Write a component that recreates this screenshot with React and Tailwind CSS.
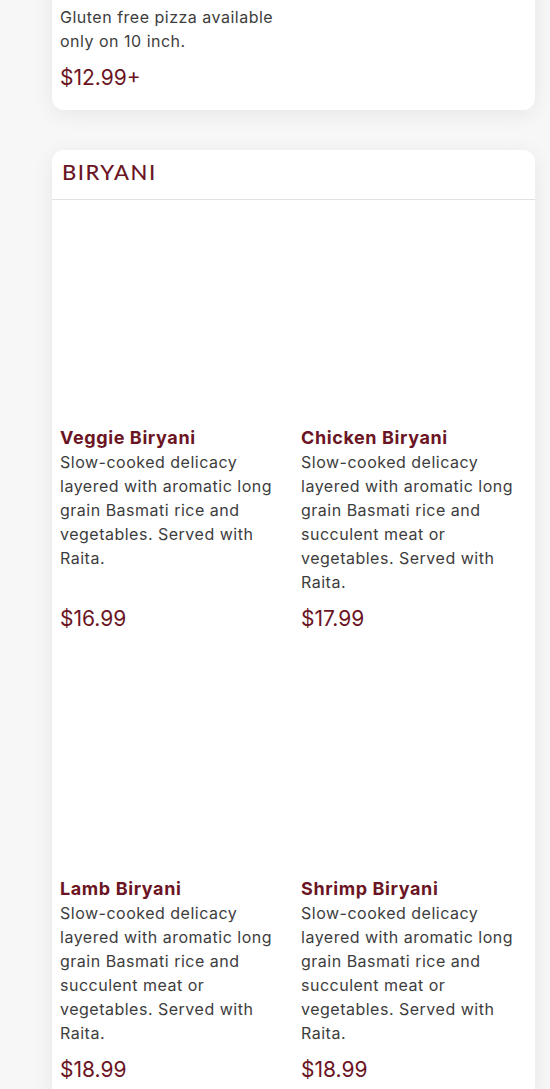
const biryani = [
  {
    name: 'Veggie Biryani',
    desc: 'Slow-cooked delicacy layered with aromatic long grain Basmati rice and vegetables. Served with Raita.',
    price: '$16.99',
  },
  {
    name: 'Chicken Biryani',
    desc: 'Slow-cooked delicacy layered with aromatic long grain Basmati rice and succulent meat or vegetables. Served with Raita.',
    price: '$17.99',
  },
  {
    name: 'Lamb Biryani',
    desc: 'Slow-cooked delicacy layered with aromatic long grain Basmati rice and succulent meat or vegetables. Served with Raita.',
    price: '$18.99',
  },
  {
    name: 'Shrimp Biryani',
    desc: 'Slow-cooked delicacy layered with aromatic long grain Basmati rice and succulent meat or vegetables. Served with Raita.',
    price: '$18.99',
  },
]

function MenuItem({ item }) {
  return (
    <div className="flex flex-col">
      {/* photo slot, image not loaded */}
      <div className="h-[210px]" />
      <h3 className="mt-2 text-[18px] leading-6 font-bold tracking-[0.6px] text-[#6b1524]">{item.name}</h3>
      <p className="text-[16px] leading-6 tracking-[0.5px] text-[#3d3d3d] pr-2">{item.desc}</p>
      <p className="mt-auto pt-[11px] text-[21px] leading-7 text-[#6b1524]">{item.price}</p>
    </div>
  )
}

export default function App() {
  return (
    <div className="min-h-screen bg-[#f7f7f7] pl-[52px] pr-[15px] overflow-hidden" style={{ fontFamily: 'Inter, sans-serif' }}>
      <div className="-mt-[245px]">
        {/* PIZZA (tail end) */}
        <section className="bg-white rounded-xl shadow-[0_4px_22px_rgba(0,0,0,0.07)] mb-10">
          <div className="grid grid-cols-[241px_1fr] px-2 pt-2 pb-[18px]">
            <MenuItem
              item={{
                name: 'Gluten Free Pizza',
                desc: 'Gluten free pizza available only on 10 inch.',
                price: '$12.99+',
              }}
            />
          </div>
        </section>

        {/* BIRYANI */}
        <section className="bg-white rounded-xl shadow-[0_4px_22px_rgba(0,0,0,0.07)] mb-10">
          <div className="h-[50px] border-b border-[#e2e2e2] px-[10px] flex items-center">
            <h2
              className="text-[22px] font-medium tracking-[1.5px] text-[#6b1524] pb-[6px]"
              style={{ fontFamily: 'Lato, sans-serif' }}
            >
              BIRYANI
            </h2>
          </div>
          <div className="grid grid-cols-[241px_1fr] gap-y-[26px] px-2 pt-2 pb-[18px]">
            {biryani.map((b) => (
              <MenuItem key={b.name} item={b} />
            ))}
          </div>
        </section>
      </div>
    </div>
  )
}
